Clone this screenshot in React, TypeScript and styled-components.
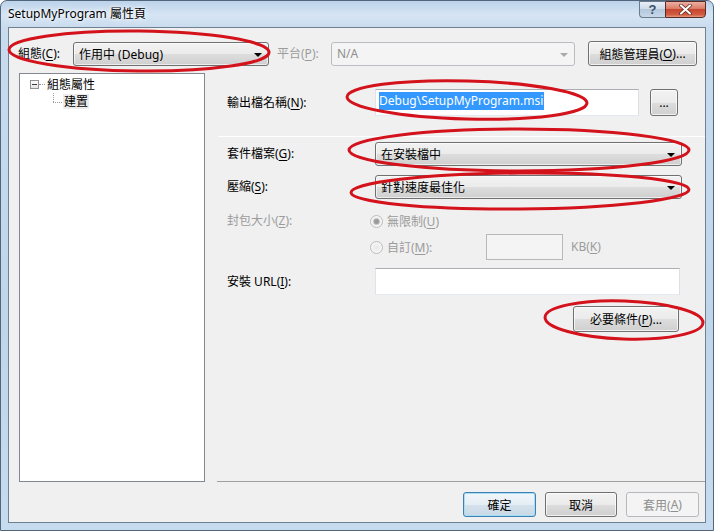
import React from 'react';
import styled, { createGlobalStyle, css } from 'styled-components';

const Global = createGlobalStyle`
  html, body { margin: 0; padding: 0; background: #ffffff; }
  body {
    font-family: "Noto Sans", "Noto Sans CJK TC", sans-serif;
    font-size: 12px;
    color: #000;
  }
  * { box-sizing: border-box; }
`;

const Window = styled.div`
  position: relative;
  width: 714px;
  height: 531px;
  border: 1px solid #53657a;
  border-radius: 7px 7px 0 0;
  background: linear-gradient(180deg, #bcd3ea 0px, #d6e5f4 14px, #c9dcee 26px, #bfd5ea 60%, #c6dbee 100%);
  display: flex;
  flex-direction: column;
  overflow: hidden;
`;

const TitleBar = styled.div`
  height: 26px;
  flex: none;
  display: flex;
  justify-content: space-between;
  align-items: flex-start;
  padding: 0 7px;
`;

const TitleText = styled.div`
  padding-top: 5px;
  line-height: 16px;
  font-size: 12px;
  color: #000;
  text-shadow: 0 0 6px #ffffff, 0 0 3px #ffffff;
`;

const CaptionButtons = styled.div`
  display: flex;
`;

const CaptionButton = styled.div<{ $kind: 'help' | 'close' }>`
  height: 17px;
  display: flex;
  align-items: center;
  justify-content: center;
  ${(p) =>
    p.$kind === 'help'
      ? css`
          width: 26px;
          border: 1px solid #6a7b8e;
          border-right: none;
          border-radius: 0 0 0 4px;
          background: linear-gradient(180deg, #e6eef7 0%, #cfdceb 45%, #b4c7db 50%, #c7d8ea 100%);
          color: #3b4f66;
          font-family: "Liberation Sans", sans-serif;
          font-weight: bold;
          font-size: 13px;
        `
      : css`
          width: 41px;
          border: 1px solid #5c2a24;
          border-radius: 0 0 4px 0;
          background: linear-gradient(180deg, #eab0a2 0%, #dc7b66 45%, #c6472f 50%, #d25c42 85%, #e79c82 100%);
        `}
`;

const Client = styled.div`
  flex: none;
  height: 496px;
  margin: 0 7px;
  background: #f0f0f0;
  border: 1px solid #6f8092;
  display: flex;
  flex-direction: column;
`;

const TopRow = styled.div`
  display: flex;
  align-items: center;
  height: 25px;
  margin: 13px 0 0 9px;
`;

const Label = styled.span<{ $w?: number; $disabled?: boolean; $ml?: number }>`
  flex: none;
  width: ${(p) => (p.$w ? `${p.$w}px` : 'auto')};
  margin-left: ${(p) => p.$ml ?? 0}px;
  color: ${(p) => (p.$disabled ? '#9b9b9b' : '#000')};
  white-space: nowrap;
  line-height: 16px;
  u { text-decoration: underline; text-underline-offset: 2px; }
`;

const Combo = styled.div<{ $w: number; $disabled?: boolean }>`
  flex: none;
  width: ${(p) => p.$w}px;
  height: 24px;
  border-radius: 3px;
  display: flex;
  align-items: center;
  justify-content: space-between;
  padding: 0 6px 0 5px;
  white-space: nowrap;
  ${(p) =>
    p.$disabled
      ? css`
          border: 1px solid #b9bdc1;
          background: #f4f4f4;
          color: #8f8f8f;
        `
      : css`
          border: 1px solid #707070;
          background: linear-gradient(180deg, #f2f2f2 0%, #ebebeb 50%, #dddddd 51%, #cfcfcf 100%);
          box-shadow: inset 0 0 0 1px rgba(255, 255, 255, 0.6);
          color: #000;
        `}
`;

const Arrow = styled.span<{ $disabled?: boolean }>`
  width: 0;
  height: 0;
  border-left: 4px solid transparent;
  border-right: 4px solid transparent;
  border-top: 4px solid ${(p) => (p.$disabled ? '#a9a9a9' : '#000')};
  margin-top: 2px;
`;

const Button = styled.div<{ $w: number; $h?: number; $variant?: 'default' | 'disabled' | 'normal'; $ml?: number }>`
  flex: none;
  width: ${(p) => p.$w}px;
  height: ${(p) => p.$h ?? 25}px;
  margin-left: ${(p) => p.$ml ?? 0}px;
  border-radius: 3px;
  display: flex;
  align-items: center;
  justify-content: center;
  white-space: nowrap;
  u { text-decoration: underline; text-underline-offset: 2px; }
  ${(p) =>
    p.$variant === 'default'
      ? css`
          border: 1px solid #3c7fb1;
          background: linear-gradient(180deg, #f1f6fa 0%, #e5eef5 50%, #d5e2ec 51%, #c8d8e6 100%);
          box-shadow: inset 0 0 0 1px #a7def6;
        `
      : p.$variant === 'disabled'
      ? css`
          border: 1px solid #b5b9bd;
          background: #f4f4f4;
          color: #8f8f8f;
        `
      : css`
          border: 1px solid #707070;
          background: linear-gradient(180deg, #f2f2f2 0%, #ebebeb 50%, #dddddd 51%, #cfcfcf 100%);
          box-shadow: inset 0 0 0 1px rgba(255, 255, 255, 0.7);
        `}
`;

const Body = styled.div`
  display: flex;
  margin-top: 7px;
  padding-left: 10px;
`;

const Tree = styled.div`
  flex: none;
  width: 186px;
  height: 409px;
  background: #ffffff;
  border: 1px solid #828790;
  padding: 2px 0 0 10px;
`;

const TreeRow = styled.div<{ $indent?: number }>`
  display: flex;
  align-items: center;
  height: 17px;
  padding-left: ${(p) => p.$indent ?? 0}px;
`;

const Expander = styled.span`
  width: 9px;
  height: 9px;
  border: 1px solid #919191;
  background: linear-gradient(180deg, #ffffff, #e4e4e4);
  position: relative;
  flex: none;
  &::after {
    content: '';
    position: absolute;
    left: 1px;
    top: 3px;
    width: 5px;
    height: 1px;
    background: #3d3d3d;
  }
`;

const HDots = styled.span<{ $w: number }>`
  width: ${(p) => p.$w}px;
  border-top: 1px dotted #9a9a9a;
  flex: none;
`;

const Connector = styled.span`
  width: 13px;
  height: 17px;
  flex: none;
  display: flex;
  flex-direction: column;
  padding-left: 4px;
`;

const ConnVert = styled.span`
  height: 9px;
  border-left: 1px dotted #9a9a9a;
`;

const ConnHoriz = styled.span`
  border-top: 1px dotted #9a9a9a;
`;

const TreeText = styled.span<{ $selected?: boolean }>`
  margin-left: 1px;
  padding: 0 1px;
  line-height: 15px;
  background: ${(p) => (p.$selected ? '#ececec' : 'transparent')};
`;

const RightPanel = styled.div`
  flex: 1;
  height: 409px;
  margin-left: 12px;
  border-bottom: 1px solid #a0a0a0;
  padding: 16px 0 0 10px;
  display: flex;
  flex-direction: column;
`;

const Row = styled.div<{ $mt: number; $h: number; $end?: boolean }>`
  display: flex;
  align-items: center;
  margin-top: ${(p) => p.$mt}px;
  height: ${(p) => p.$h}px;
  justify-content: ${(p) => (p.$end ? 'flex-end' : 'flex-start')};
`;

const TextBox = styled.div<{ $w: number; $h: number; $disabled?: boolean }>`
  flex: none;
  width: ${(p) => p.$w}px;
  height: ${(p) => p.$h}px;
  border: 1px solid;
  border-color: ${(p) => (p.$disabled ? '#b8b8b8' : '#abadb3 #dbdfe6 #e3e9ef #e2e3ea')};
  background: ${(p) => (p.$disabled ? '#f4f4f4' : '#ffffff')};
  display: flex;
  align-items: center;
  padding-left: 3px;
`;

const Selected = styled.span`
  background: #3399ff;
  color: #ffffff;
  line-height: 18px;
  padding: 0 1px 0 0;
  margin-top: -3px;
`;

const Separator = styled.div`
  margin: 20px 0 0 -9px;
  height: 1px;
  background: #ffffff;
`;

const RadioWrap = styled.div<{ $w?: number }>`
  flex: none;
  display: flex;
  align-items: center;
  margin-left: -5px;
  width: ${(p) => (p.$w ? `${p.$w}px` : 'auto')};
  color: #9b9b9b;
  u { text-decoration: underline; text-underline-offset: 2px; }
`;

const Radio = styled.span<{ $checked?: boolean }>`
  width: 13px;
  height: 13px;
  border-radius: 50%;
  border: 1px solid #bcbcbc;
  background: radial-gradient(circle, #e8e8e8 0%, #f6f6f6 70%);
  margin-right: 4px;
  flex: none;
  display: flex;
  align-items: center;
  justify-content: center;
  &::after {
    content: '';
    display: ${(p) => (p.$checked ? 'block' : 'none')};
    width: 5px;
    height: 5px;
    border-radius: 50%;
    background: #9a9a9a;
    box-shadow: 0 0 0 1px #c9c9c9;
  }
`;

const Footer = styled.div`
  display: flex;
  justify-content: flex-end;
  gap: 9px;
  margin-top: 10px;
  padding-right: 6px;
`;

const Overlay = styled.svg`
  position: absolute;
  left: -1px;
  top: -1px;
  pointer-events: none;
`;

export default function App() {
  return (
    <>
      <Global />
      <Window>
        <TitleBar>
          <TitleText>SetupMyProgram 屬性頁</TitleText>
          <CaptionButtons>
            <CaptionButton $kind="help">?</CaptionButton>
            <CaptionButton $kind="close">
              <svg width="13" height="11" viewBox="0 0 13 11">
                <path d="M2 1.5 L11 9.5 M11 1.5 L2 9.5" stroke="#5a2018" strokeWidth="3.6" strokeLinecap="round" />
                <path d="M2 1.5 L11 9.5 M11 1.5 L2 9.5" stroke="#ffffff" strokeWidth="2.2" strokeLinecap="round" />
              </svg>
            </CaptionButton>
          </CaptionButtons>
        </TitleBar>
        <Client>
          <TopRow>
            <Label $w={55}>
              組態(<u>C</u>):
            </Label>
            <Combo $w={196}>
              <span>作用中 (Debug)</span>
              <Arrow />
            </Combo>
            <Label $w={54} $ml={8} $disabled>
              平台(<u>P</u>):
            </Label>
            <Combo $w={244} $disabled>
              <span>N/A</span>
              <Arrow $disabled />
            </Combo>
            <Button $w={109} $ml={13}>
              組態管理員(<u>O</u>)...
            </Button>
          </TopRow>
          <Body>
            <Tree>
              <TreeRow>
                <Expander />
                <HDots $w={6} />
                <TreeText>組態屬性</TreeText>
              </TreeRow>
              <TreeRow $indent={19}>
                <Connector>
                  <ConnVert />
                  <ConnHoriz />
                </Connector>
                <TreeText $selected>建置</TreeText>
              </TreeRow>
            </Tree>
            <RightPanel>
              <Row $mt={0} $h={27}>
                <Label $w={148}>
                  輸出檔名稱(<u>N</u>):
                </Label>
                <TextBox $w={264} $h={27}>
                  <Selected>Debug\SetupMyProgram.msi</Selected>
                </TextBox>
                <Button $w={28} $h={27} $ml={11}>
                  ...
                </Button>
              </Row>
              <Separator />
              <Row $mt={5} $h={24}>
                <Label $w={148}>
                  套件檔案(<u>G</u>):
                </Label>
                <Combo $w={307}>
                  <span>在安裝檔中</span>
                  <Arrow />
                </Combo>
              </Row>
              <Row $mt={9} $h={24}>
                <Label $w={148}>
                  壓縮(<u>S</u>):
                </Label>
                <Combo $w={307}>
                  <span>針對速度最佳化</span>
                  <Arrow />
                </Combo>
              </Row>
              <Row $mt={12} $h={20}>
                <Label $w={148} $disabled>
                  封包大小(<u>Z</u>):
                </Label>
                <RadioWrap>
                  <Radio $checked />
                  無限制(<u>U</u>)
                </RadioWrap>
              </Row>
              <Row $mt={3} $h={26}>
                <Label $w={148} />
                <RadioWrap $w={116}>
                  <Radio />
                  自訂(<u>M</u>):
                </RadioWrap>
                <TextBox $w={77} $h={26} $disabled />
                <Label $ml={8} $disabled>
                  KB(<u>K</u>)
                </Label>
              </Row>
              <Row $mt={8} $h={27}>
                <Label $w={148}>
                  安裝 URL(<u>I</u>):
                </Label>
                <TextBox $w={305} $h={27} />
              </Row>
              <Row $mt={11} $h={26} $end>
                <Button $w={106} $h={26} style={{ marginRight: 26 }}>
                  必要條件(<u>P</u>)...
                </Button>
              </Row>
            </RightPanel>
          </Body>
          <Footer>
            <Button $w={73} $variant="default">
              確定
            </Button>
            <Button $w={72}>取消</Button>
            <Button $w={73} $variant="disabled">
              套用(<u>A</u>)
            </Button>
          </Footer>
        </Client>
        <Overlay width="714" height="531" viewBox="0 0 714 531">
          <g fill="none" stroke="#d3121c" strokeWidth="3">
            <ellipse cx="139" cy="51" rx="130" ry="20" transform="rotate(0.6 139 51)" />
            <ellipse cx="467" cy="100" rx="120" ry="19" transform="rotate(1.5 467 100)" />
            <ellipse cx="519" cy="150" rx="170" ry="21" />
            <ellipse cx="520" cy="191" rx="169" ry="18" transform="rotate(-0.5 520 191)" />
            <ellipse cx="624" cy="320" rx="79" ry="19" transform="rotate(2 624 320)" />
          </g>
        </Overlay>
      </Window>
    </>
  );
}
